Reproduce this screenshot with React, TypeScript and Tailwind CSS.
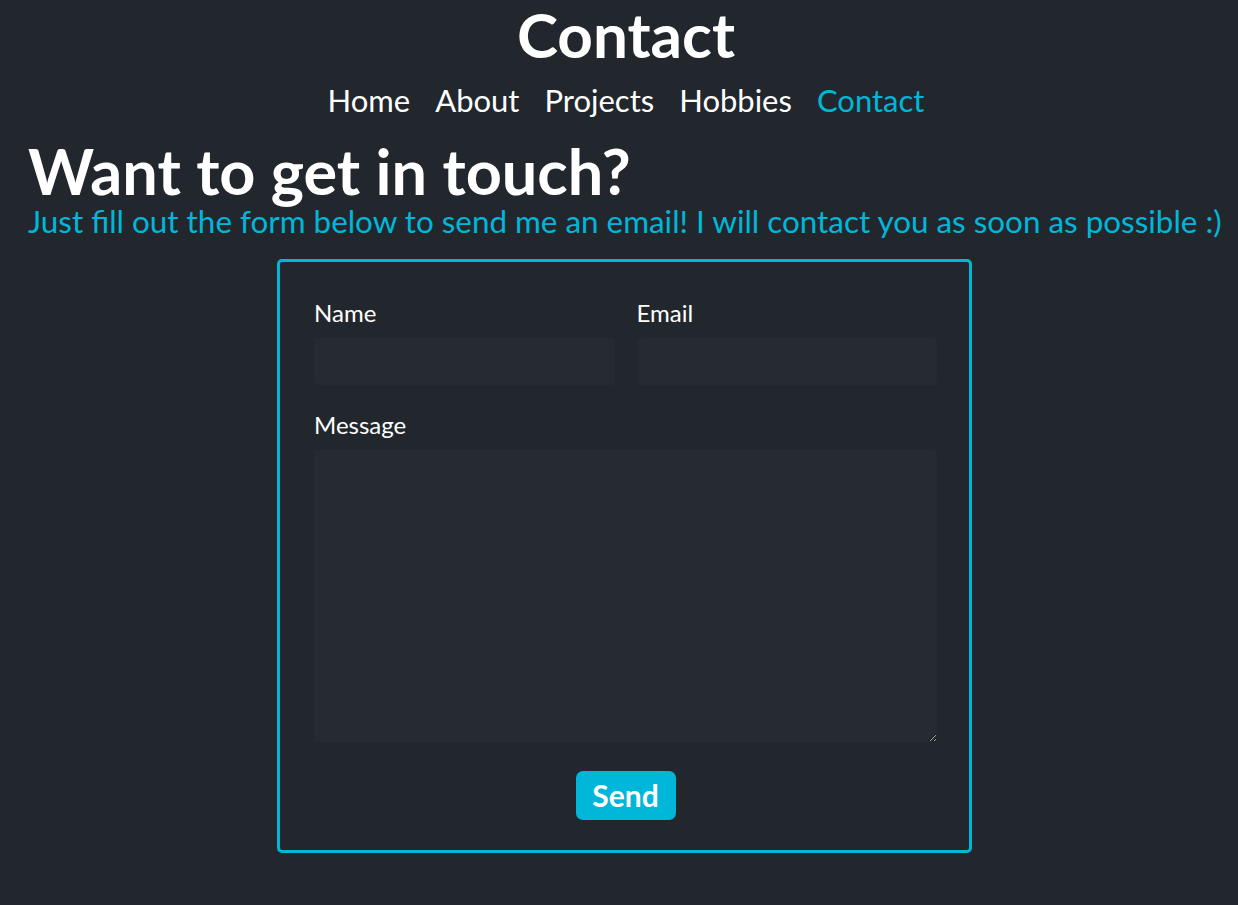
export default function App() {
  const links = ['Home', 'About', 'Projects', 'Hobbies', 'Contact'];

  return (
    <div
      className="min-h-screen bg-[#22272e] text-white"
      style={{ fontFamily: 'Lato, "Noto Sans", sans-serif' }}
    >
      <header className="flex flex-col items-center pl-[14px]">
        <h1 className="text-[62px] font-bold leading-[68px]">Contact</h1>
        <nav className="flex gap-[25px] text-[31px] leading-[36px] mt-[14px]">
          {links.map((l) => (
            <a key={l} href="#" className={l === 'Contact' ? 'text-[#00b7d9]' : 'text-white'}>
              {l}
            </a>
          ))}
        </nav>
      </header>

      <section className="px-[28px] mt-[19px]">
        <h2 className="text-[63px] font-bold leading-[68px]">Want to get in touch?</h2>
        <p className="text-[31.4px] leading-[34px] text-[#00b7d9] mt-[-1px] whitespace-nowrap">
          Just fill out the form below to send me an email! I will contact you as soon as possible :)
        </p>
      </section>

      <div className="flex justify-center mt-[21px] pl-[11px]">
        <form
          className="w-[695px] border-[3px] border-[#00b7d9] rounded-[5px] pl-[34px] pr-[32px] pt-[37px] pb-[30px]"
          onSubmit={(e) => e.preventDefault()}
        >
          <div className="grid grid-cols-2 gap-[22px]">
            <label className="flex flex-col">
              <span className="text-[24px] leading-[28px]">Name</span>
              <input className="mt-[11px] h-[47px] rounded-[4px] bg-[#262b32] outline-none px-3 text-white" />
            </label>
            <label className="flex flex-col">
              <span className="text-[24px] leading-[28px]">Email</span>
              <input className="mt-[11px] h-[47px] rounded-[4px] bg-[#262b32] outline-none px-3 text-white" />
            </label>
          </div>
          <label className="flex flex-col mt-[26px]">
            <span className="text-[24px] leading-[28px]">Message</span>
            <textarea className="mt-[11px] h-[292px] rounded-[4px] bg-[#262b32] outline-none p-3 text-white" />
          </label>
          <div className="flex justify-center mt-[29px]">
            <button
              type="submit"
              className="w-[100px] h-[49px] rounded-[7px] bg-[#00b7d9] text-[30px] font-bold text-white"
            >
              Send
            </button>
          </div>
        </form>
      </div>
    </div>
  );
}
